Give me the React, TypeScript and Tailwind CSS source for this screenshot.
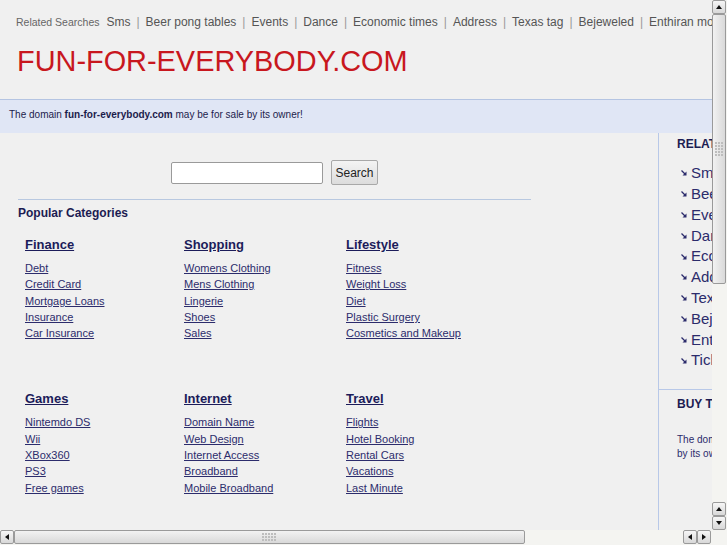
import React from "react";

const RELATED = [
  "Sms",
  "Beer pong tables",
  "Events",
  "Dance",
  "Economic times",
  "Address",
  "Texas tag",
  "Bejeweled",
  "Enthiran movie",
  "Tickets",
];

const CATEGORIES = [
  { title: "Finance", links: ["Debt", "Credit Card", "Mortgage Loans", "Insurance", "Car Insurance"] },
  { title: "Shopping", links: ["Womens Clothing", "Mens Clothing", "Lingerie", "Shoes", "Sales"] },
  { title: "Lifestyle", links: ["Fitness", "Weight Loss", "Diet", "Plastic Surgery", "Cosmetics and Makeup"] },
  { title: "Games", links: ["Nintemdo DS", "Wii", "XBox360", "PS3", "Free games"] },
  { title: "Internet", links: ["Domain Name", "Web Design", "Internet Access", "Broadband", "Mobile Broadband"] },
  { title: "Travel", links: ["Flights", "Hotel Booking", "Rental Cars", "Vacations", "Last Minute"] },
];

function Triangle({ dir }: { dir: "up" | "down" | "left" | "right" }) {
  const points = {
    up: "1,6 4,2 7,6",
    down: "1,2 4,6 7,2",
    left: "6,1 2,4 6,7",
    right: "2,1 6,4 2,7",
  }[dir];
  return (
    <svg width="8" height="8" viewBox="0 0 8 8">
      <polygon points={points} fill="#111" />
    </svg>
  );
}

function ArrowBtn({ dir }: { dir: "up" | "down" | "left" | "right" }) {
  return (
    <div className="w-[14px] h-[14px] flex items-center justify-center border border-[#9a9a9a] rounded-[2px] bg-gradient-to-b from-[#f6f6f6] to-[#d8d8d8]">
      <Triangle dir={dir} />
    </div>
  );
}

function Grip({ vertical }: { vertical: boolean }) {
  const cols = vertical ? 3 : 5;
  const rows = vertical ? 5 : 3;
  const dots = [];
  for (let r = 0; r < rows; r++)
    for (let c = 0; c < cols; c++)
      dots.push(<rect key={`${r}-${c}`} x={c * 3} y={r * 3} width="2" height="2" fill="#bdbdbd" />);
  return (
    <svg width={cols * 3} height={rows * 3}>
      {dots}
    </svg>
  );
}

function SideArrow() {
  return (
    <svg width="6" height="6" viewBox="0 0 6 6" className="shrink-0">
      <path d="M0.5 0.5 L4.5 4.5" stroke="#2b2b6b" strokeWidth="1.2" />
      <polygon points="5.5,1.5 5.5,5.5 1.5,5.5" fill="#2b2b6b" />
    </svg>
  );
}

export default function App() {
  return (
    <div className="w-[727px] h-[545px] flex flex-col bg-[#f0f0f0] overflow-hidden font-['Liberation_Sans',Arial,sans-serif]">
      <div className="flex flex-1 min-h-0">
        {/* Page viewport */}
        <div className="flex-1 min-w-0 overflow-hidden">
          <div className="w-[900px] h-full flex flex-col">
            {/* Related searches */}
            <div className="pt-[13px] pl-4 h-[32px] flex items-baseline whitespace-nowrap">
              <span className="text-[10.5px] text-[#666] mr-[7px]">Related Searches</span>
              {RELATED.map((r, i) => (
                <span key={r} className="text-[12px] text-[#555]">
                  {i > 0 && <span className="mx-[6px] text-[#999]">|</span>}
                  {r}
                </span>
              ))}
            </div>

            {/* Domain title */}
            <div className="pl-[17px] h-[67px] pt-[12px]">
              <div className="text-[28.9px] leading-[34px] text-[#c8171e]">FUN-FOR-EVERYBODY.COM</div>
            </div>

            {/* Sale banner */}
            <div className="h-[34px] border-t border-[#b4c4e2] bg-[#e0e6f5] pt-[8px] pl-[9px] text-[10px] leading-[14px] text-[#1c1c4c]">
              The domain <b>fun-for-everybody.com</b> may be for sale by its owner!
            </div>

            {/* Main */}
            <div className="flex flex-1 min-h-0">
              <div className="w-[658px] shrink-0 pl-[18px]">
                <div className="w-[513px]">
                  <div className="flex justify-center items-center gap-[8px] pt-[27px] pb-[14px] border-b border-[#b8c8e0]">
                    <input
                      type="text"
                      className="w-[152px] h-[22px] bg-white border border-[#9a9a9a] rounded-[2px] outline-none"
                    />
                    <button className="w-[47px] h-[25px] border border-[#a8a8a8] rounded-[2px] bg-gradient-to-b from-[#f4f4f4] to-[#dcdcdc] text-[12px] text-[#222]">
                      Search
                    </button>
                  </div>
                  <div className="pt-[4px] text-[12px] font-bold text-[#1c1c52]">Popular Categories</div>
                  <div className="grid grid-cols-[159px_162px_192px] pl-[7px] pt-[15px] gap-y-[50px]">
                    {CATEGORIES.map((cat) => (
                      <div key={cat.title}>
                        <div className="text-[13px] leading-[16px] font-bold underline text-[#1c1c5a] mb-[7px]">
                          {cat.title}
                        </div>
                        <ul className="flex flex-col">
                          {cat.links.map((l) => (
                            <li key={l} className="text-[11px] leading-[16.3px] underline text-[#2c2c6c]">
                              {l}
                            </li>
                          ))}
                        </ul>
                      </div>
                    ))}
                  </div>
                </div>
              </div>

              {/* Sidebar */}
              <div className="w-[242px] border-l border-[#b8c8e8] flex flex-col">
                <div className="pl-[18px] pt-[2px] h-[256px]">
                  <div className="text-[12px] font-bold text-[#1c1c52]">RELATED SEARCHES</div>
                  <ul className="pt-[10px] pl-[4px] flex flex-col">
                    {RELATED.map((r) => (
                      <li key={r} className="flex items-center gap-[4px] h-[20.8px] text-[15px] text-[#2b2b6b] whitespace-nowrap">
                        <SideArrow />
                        {r}
                      </li>
                    ))}
                  </ul>
                </div>
                <div className="border-t border-[#b8c8e8] pl-[18px] pt-[5px]">
                  <div className="text-[12px] font-bold text-[#1c1c52]">BUY THIS DOMAIN</div>
                  <div className="pt-[20px] text-[10px] leading-[14px] text-[#2b2b6b] whitespace-nowrap">
                    The domain fun-for-everybody.com may be for sale
                    <br />
                    by its owner!
                  </div>
                </div>
              </div>
            </div>
          </div>
        </div>

        {/* Vertical scrollbar */}
        <div className="w-[15px] shrink-0 flex flex-col bg-[#f4f4f1]">
          <ArrowBtn dir="up" />
          <div className="h-[270px] w-[14px] border border-[#9a9a9a] rounded-[2px] bg-gradient-to-r from-[#f2f2f2] to-[#d9d9d9] flex items-center justify-center">
            <Grip vertical />
          </div>
          <div className="flex-1" />
          <ArrowBtn dir="up" />
          <ArrowBtn dir="down" />
        </div>
      </div>

      {/* Horizontal scrollbar */}
      <div className="h-[15px] shrink-0 flex bg-[#f4f4f1]">
        <ArrowBtn dir="left" />
        <div className="w-[511px] h-[14px] border border-[#9a9a9a] rounded-[2px] bg-gradient-to-b from-[#f2f2f2] to-[#d9d9d9] flex items-center justify-center">
          <Grip vertical={false} />
        </div>
        <div className="flex-1" />
        <ArrowBtn dir="left" />
        <ArrowBtn dir="right" />
        <div className="w-[16px]" />
      </div>
    </div>
  );
}
